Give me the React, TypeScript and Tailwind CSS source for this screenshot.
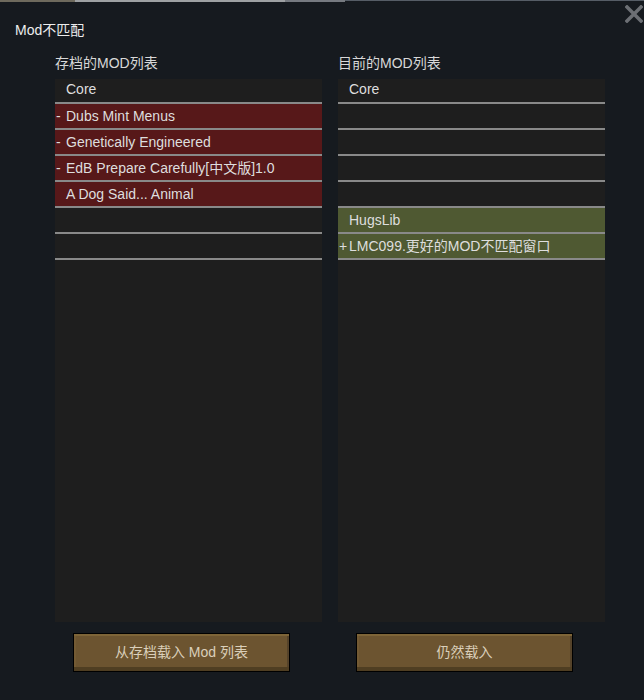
import React from "react";

type Row = { prefix?: string; name?: string; tone?: "red" | "green" };

const leftRows: Row[] = [
  { name: "Core" },
  { prefix: "-", name: "Dubs Mint Menus", tone: "red" },
  { prefix: "-", name: "Genetically Engineered", tone: "red" },
  { prefix: "-", name: "EdB Prepare Carefully[中文版]1.0", tone: "red" },
  { name: "A Dog Said... Animal", tone: "red" },
  {},
  {},
];

const rightRows: Row[] = [
  { name: "Core" },
  {},
  {},
  {},
  {},
  { name: "HugsLib", tone: "green" },
  { prefix: "+", name: "LMC099.更好的MOD不匹配窗口", tone: "green" },
];

function ModRow({ row, first }: { row: Row; first: boolean }) {
  const bg =
    row.tone === "red"
      ? "bg-[#571819]"
      : row.tone === "green"
      ? "bg-[#4f5932]"
      : "";
  return (
    <div className="border-b-2 border-[#898989]">
      <div
        className={`flex items-center ${first ? "h-[23px] pb-[3px]" : "h-[24px] pb-[1px]"} ${bg} text-[14px] text-[#dedede]`}
      >
        <span className="w-[11px] shrink-0 pl-[1px] leading-none">{row.prefix ?? ""}</span>
        <span className="whitespace-nowrap leading-none">{row.name ?? ""}</span>
      </div>
    </div>
  );
}

function Column({
  title,
  rows,
  button,
}: {
  title: string;
  rows: Row[];
  button: string;
}) {
  return (
    <div className="flex w-[267px] flex-col">
      <div className="h-[16px] text-[14px] leading-[16px] text-[#d8d8d8]">{title}</div>
      <div className="mt-[8px] h-[543px] bg-[#1e1e1e]">
        {rows.map((r, i) => (
          <ModRow key={i} row={r} first={i === 0} />
        ))}
      </div>
      <button className="ml-[18px] mt-[11px] flex h-[39px] w-[217px] items-center justify-center border border-black bg-[#6c5430] text-[14px] text-[#dacfba] shadow-[inset_0_2px_0_#7e6538,inset_0_-4px_0_#4f3e22,inset_-2px_0_0_#55432a,inset_2px_0_0_#735a33]">
        {button}
      </button>
    </div>
  );
}

export default function App() {
  return (
    <div className="relative h-[700px] w-[644px] overflow-hidden bg-[#161a1f] font-['Liberation_Sans','Noto_Sans_CJK_SC',sans-serif]">
      <div className="flex h-[2px] items-start">
        <div className="h-[2px] w-[75px] bg-[#6e6a5d]" />
        <div className="h-[2px] w-[210px] bg-[#9ea1a3]" />
        <div className="h-[2px] w-[60px] bg-[#767a80]" />
        <div className="h-[1px] flex-1 bg-[#565d66]" />
      </div>
      <div className="pl-[15px] pt-[18px] text-[14px] leading-[20px] text-[#ededed]">Mod不匹配</div>
      <button className="absolute right-[1px] top-[5px] h-[18px] w-[18px]">
        <svg width="18" height="18" viewBox="0 0 18 18">
          <path d="M2 2 L16 16 M16 2 L2 16" stroke="#6c6f74" strokeWidth="3.5" strokeLinecap="square" />
        </svg>
      </button>
      <div className="mt-[15px] flex gap-[16px] pl-[55px]">
        <Column title="存档的MOD列表" rows={leftRows} button="从存档载入 Mod 列表" />
        <Column title="目前的MOD列表" rows={rightRows} button="仍然载入" />
      </div>
    </div>
  );
}
